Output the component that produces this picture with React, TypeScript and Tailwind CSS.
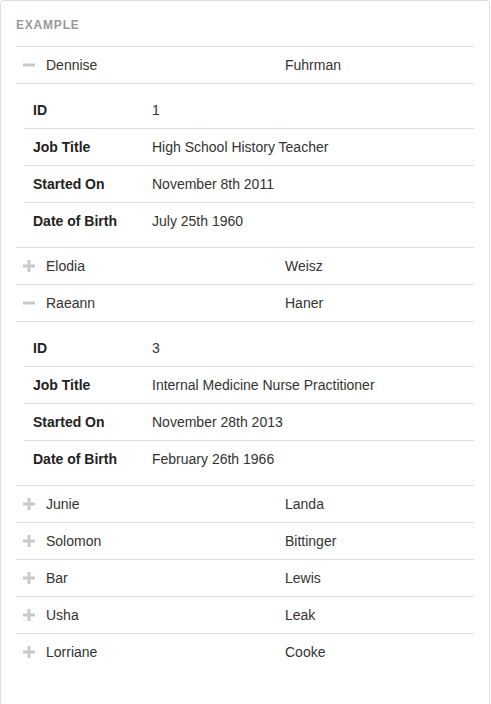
import React from "react";

type Person = {
  first: string;
  last: string;
  open?: boolean;
  id?: number;
  job?: string;
  started?: string;
  dob?: string;
};

const people: Person[] = [
  { first: "Dennise", last: "Fuhrman", open: true, id: 1, job: "High School History Teacher", started: "November 8th 2011", dob: "July 25th 1960" },
  { first: "Elodia", last: "Weisz" },
  { first: "Raeann", last: "Haner", open: true, id: 3, job: "Internal Medicine Nurse Practitioner", started: "November 28th 2013", dob: "February 26th 1966" },
  { first: "Junie", last: "Landa" },
  { first: "Solomon", last: "Bittinger" },
  { first: "Bar", last: "Lewis" },
  { first: "Usha", last: "Leak" },
  { first: "Lorriane", last: "Cooke" },
];

function Icon({ open }: { open?: boolean }) {
  return (
    <svg width="12" height="12" viewBox="0 0 12 12" className="block">
      <rect x="0" y="4.5" width="12" height="3" fill="#c9c9c9" />
      {!open && <rect x="4.5" y="0" width="3" height="12" fill="#c9c9c9" />}
    </svg>
  );
}

function DetailRow({ label, value, first }: { label: string; value: string; first?: boolean }) {
  return (
    <div className={first ? "flex h-[36px] items-center" : "flex h-[37px] items-center border-t border-[#dddddd]"}>
      <div className="w-[128px] pl-[9px] font-bold text-[14px] text-[#222]">{label}</div>
      <div className="text-[14px] text-[#333]">{value}</div>
    </div>
  );
}

export default function App() {
  return (
    <div className="min-h-screen bg-white" style={{ fontFamily: '"Liberation Sans", Arial, sans-serif' }}>
      <div className="w-[490px] border border-[#dddddd] rounded-t-[4px] px-[15px] pb-[60px]">
        <div className="h-[45px] pt-[17px] text-[12px] font-bold tracking-[0.8px] text-[#999999] leading-[14px]">EXAMPLE</div>
        {people.map((p, i) => (
          <div key={i}>
            <div className="flex h-[37px] items-center border-t border-[#dddddd] text-[14px] text-[#333]">
              <div className="w-[30px] pl-[7px]">
                <Icon open={p.open} />
              </div>
              <div className="w-[239px]">{p.first}</div>
              <div>{p.last}</div>
            </div>
            {p.open && (
              <div className="border-t border-[#dddddd] pl-[8px] pt-[8px] pb-[8px]">
                <DetailRow label="ID" value={String(p.id)} first />
                <DetailRow label="Job Title" value={p.job!} />
                <DetailRow label="Started On" value={p.started!} />
                <DetailRow label="Date of Birth" value={p.dob!} />
              </div>
            )}
          </div>
        ))}
      </div>
    </div>
  );
}
